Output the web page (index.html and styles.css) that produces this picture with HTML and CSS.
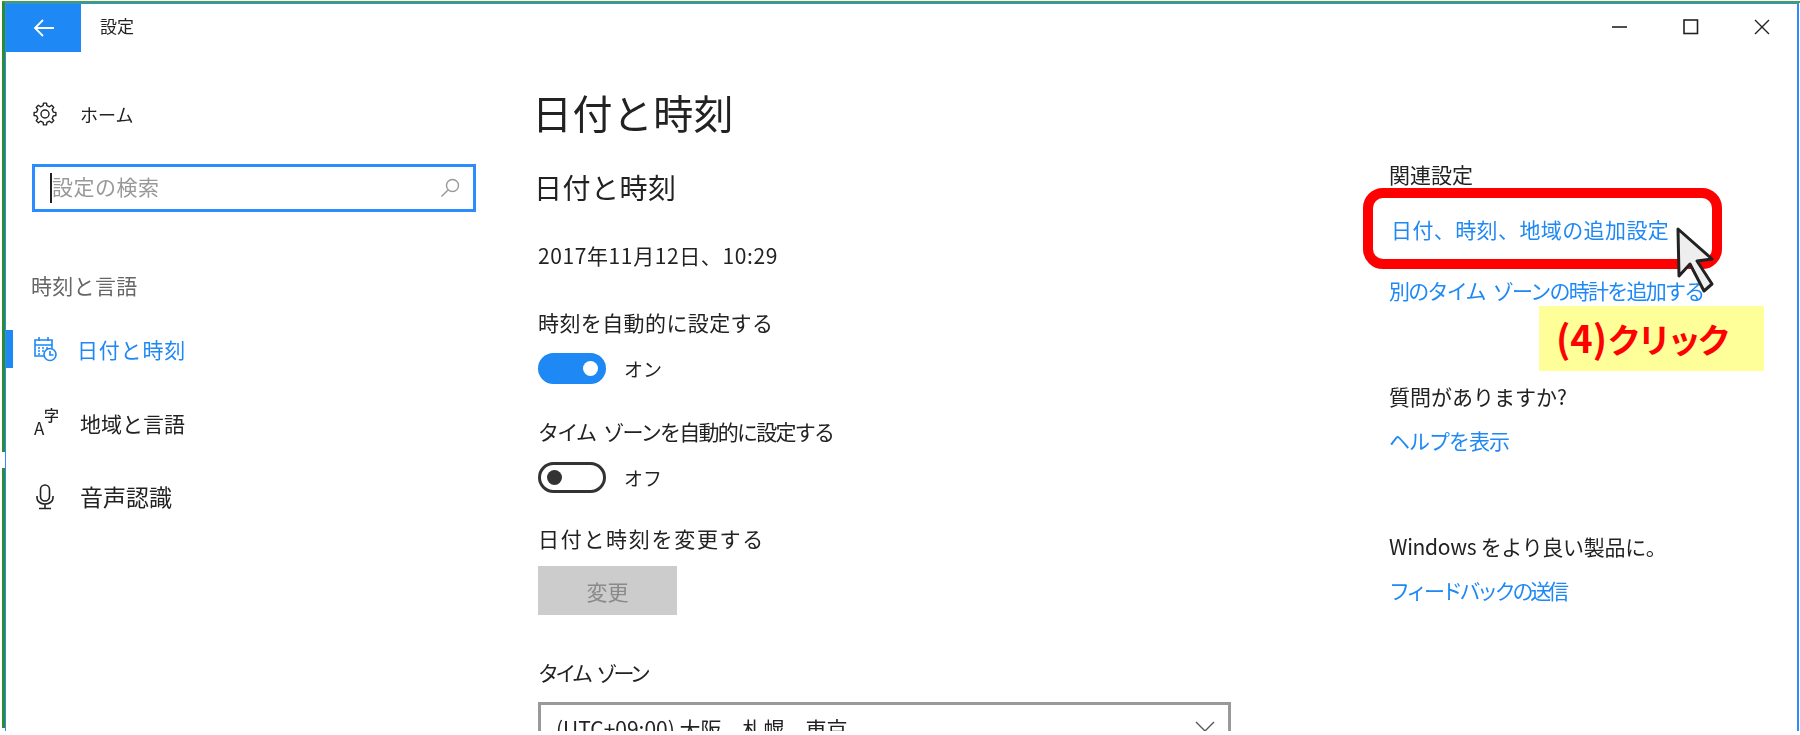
FILE: index.html
```html
<!DOCTYPE html>
<html lang="ja">
<head>
    <meta charset="UTF-8">
    <title>設定</title>
    <link rel="stylesheet" href="styles.css">
</head>
<body>
    <div class="frame">
        <div class="window">
            <div class="titlebar">
                <div class="back">
                    <svg width="22" height="18" viewBox="0 0 22 18"><path d="M10 1 2 9l8 8M2 9h19" fill="none" stroke="#fff" stroke-width="1.8"/></svg>
                </div>
                <div class="app-title">設定</div>
                <div class="win-controls">
                    <svg width="16" height="16" viewBox="0 0 16 16"><path d="M0 8h15" stroke="#222" stroke-width="1.6"/></svg>
                    <svg width="16" height="16" viewBox="0 0 16 16"><rect x="1" y="1" width="13.5" height="13.5" fill="none" stroke="#222" stroke-width="1.6"/></svg>
                    <svg width="16" height="16" viewBox="0 0 16 16"><path d="M1 1l14 14M15 1 1 15" stroke="#222" stroke-width="1.4"/></svg>
                </div>
            </div>

            <div class="layout">
                <div class="sidebar">
                    <div class="nav-item home">
                        <svg class="nav-icon" width="24" height="24" viewBox="0 0 24 24" fill="none" stroke="#222" stroke-width="1.4" stroke-linejoin="round">
                            <polygon points="10.09,3.72 10.47,1.11 13.53,1.11 13.91,3.72 16.5,4.79 18.62,3.21 20.79,5.38 19.21,7.5 20.28,10.09 22.89,10.47 22.89,13.53 20.28,13.91 19.21,16.5 20.79,18.62 18.62,20.79 16.5,19.21 13.91,20.28 13.53,22.89 10.47,22.89 10.09,20.28 7.5,19.21 5.38,20.79 3.21,18.62 4.79,16.5 3.72,13.91 1.11,13.53 1.11,10.47 3.72,10.09 4.79,7.5 3.21,5.38 5.38,3.21 7.5,4.79"/>
                            <circle cx="12" cy="12" r="4"/>
                        </svg>
                        <span class="home-label">ホーム</span>
                    </div>

                    <div class="search">
                        <span class="caret"></span>
                        <span class="search-text">設定の検索</span>
                        <svg width="20" height="20" viewBox="0 0 20 20" fill="none" stroke="#999" stroke-width="1.4"><circle cx="12.5" cy="7.5" r="6"/><path d="M8 12 1.5 18.5"/></svg>
                    </div>

                    <div class="section-title">時刻と言語</div>

                    <div class="nav-item active">
                        <svg class="nav-icon" width="24" height="26" viewBox="0 0 24 26" fill="none" stroke="#1e88f5" stroke-width="1.6">
                            <path d="M11 20H2V4h17v8M2 9h17M6 1v4M15 1v4"/>
                            <path d="M5 12h2M9 12h2M13 12h2M5 15h2M9 15h2M5 18h2" stroke-width="1.5"/>
                            <circle cx="17" cy="18.500" r="6" fill="#fff"/>
                            <path d="M17 15v4h3.500"/>
                        </svg>
                        <span class="active-label">日付と時刻</span>
                    </div>
                    <div class="nav-item">
                        <span class="nav-icon lang-icon"><span class="lang-a">A</span><span class="lang-ji">字</span></span>
                        <span>地域と言語</span>
                    </div>
                    <div class="nav-item">
                        <svg class="nav-icon" width="24" height="26" viewBox="0 0 24 26" fill="none" stroke="#222" stroke-width="1.6">
                            <rect x="7.500" y="1" width="9" height="16" rx="4.500"/>
                            <path d="M4 12v2a8 6 0 0 0 16 0v-2M12 20v4M6 24.500h12"/>
                        </svg>
                        <span class="wide-label">音声認識</span>
                    </div>
                </div>

                <div class="main">
                    <h1>日付と時刻</h1>
                    <h2>日付と時刻</h2>
                    <div class="date-now">2017年11月12日、10:29</div>

                    <div class="label first">時刻を自動的に設定する</div>
                    <div class="toggle-row">
                        <div class="toggle on"><span class="knob"></span></div>
                        <span>オン</span>
                    </div>

                    <div class="label tz-auto">タイム ゾーンを自動的に設定する</div>
                    <div class="toggle-row">
                        <div class="toggle off"><span class="knob"></span></div>
                        <span>オフ</span>
                    </div>

                    <div class="label change-label">日付と時刻を変更する</div>
                    <div class="change-btn">変更</div>

                    <div class="label tz-label">タイム ゾーン</div>
                    <div class="dropdown">
                        <span>(UTC+09:00) 大阪、札幌、東京</span>
                        <svg width="20" height="12" viewBox="0 0 20 12"><path d="M1 1l9 9 9-9" fill="none" stroke="#555" stroke-width="1.4"/></svg>
                    </div>
                </div>

                <div class="related">
                    <div class="rel-title">関連設定</div>
                    <a class="link link-one">日付、時刻、地域の追加設定</a>
                    <a class="link link-two">別のタイム ゾーンの時計を追加する</a>
                    <div class="rel-title q-title">質問がありますか?</div>
                    <a class="link link-help">ヘルプを表示</a>
                    <div class="rel-title fb-title">Windows をより良い製品に。</div>
                    <a class="link link-fb">フィードバックの送信</a>
                </div>
            </div>
        </div>
    </div>

    <!-- annotation drawn on top of the screenshot -->
    <div class="border-gap"></div>
    <div class="border-end"></div>
    <div class="red-box"></div>
    <div class="note"><span class="note-num">(4)</span>クリック</div>
    <svg class="cursor" width="50" height="72" viewBox="0 0 50 72">
        <polygon points="3,3 37,33 22,35 37,58 29,65 15,38 4,50" fill="#eeeeee" stroke="#222" stroke-width="3" stroke-linejoin="round"/>
    </svg>
</body>
</html>
```

FILE: styles.css
```css
* {
    box-sizing: border-box;
}
html, body {
    margin: 0;
    height: 735px;
    overflow: hidden;
    background: white;
}
body {
    font-family: "Noto Sans CJK JP", "Noto Sans", sans-serif;
    font-size: 21px;
    color: #222;
}
.frame {
    height: 730px;
    margin: 1px 0 0 2px;
    overflow: hidden;
    border-left: 3px solid #2e8b2e;
    border-top: 2px solid #4aa04a;
    filter: blur(0.4px);
}
.window {
    height: 100%;
    margin-right: 1px;
    border-left: 1px solid #2a8cff;
    border-top: 1px solid #2a8cff;
    border-right: 2px solid #2a8cff;
    background: white;
}

/* title bar */
.titlebar {
    display: flex;
    align-items: center;
    height: 48px;
}
.back {
    width: 75px;
    height: 48px;
    background: #1e88f5;
    display: flex;
    align-items: center;
    justify-content: center;
}
.app-title {
    margin-left: 19px;
    margin-top: -6px;
    font-size: 17px;
}
.win-controls {
    margin-left: auto;
    margin-right: 27px;
    margin-top: -2px;
    display: flex;
    gap: 55px;
}

.layout {
    display: grid;
    grid-template-columns: 532px 851px 1fr;
}

/* left nav */
.sidebar {
    padding-top: 42px;
}
.nav-item {
    display: flex;
    align-items: center;
    height: 38px;
    padding-left: 27px;
    margin-bottom: 36px;
}
.nav-icon {
    flex: none;
    width: 24px;
    margin-right: 23px;
}
.home {
    height: 40px;
    margin-bottom: 0;
}
.home-label {
    font-size: 18px;
}
.wide-label {
    font-size: 23px;
    margin-top: -2px;
}
.active {
    color: #1e88f5;
    box-shadow: inset 7px 0 0 #1e88f5;
}
.active-label {
    margin-left: -3px;
    letter-spacing: 0.8px;
}
.lang-icon {
    position: relative;
    height: 26px;
}
.lang-a {
    position: absolute;
    left: 1px;
    bottom: 0;
    font-size: 17px;
    line-height: 16px;
}
.lang-ji {
    position: absolute;
    left: 11px;
    top: -3px;
    font-size: 15px;
    font-weight: 500;
    line-height: 16px;
}
.search {
    display: flex;
    align-items: center;
    width: 444px;
    height: 48px;
    margin: 30px 0 0 26px;
    padding: 0 13px 0 15px;
    border: 3px solid #2a8cff;
}
.caret {
    width: 2px;
    height: 30px;
    background: #222;
}
.search-text {
    flex: 1;
    margin-top: -4px;
    letter-spacing: 0.5px;
    color: #999;
}
.section-title {
    margin: 58px 0 30px 25px;
    line-height: 30px;
    letter-spacing: 0.3px;
    color: #666;
}

/* middle column */
.main {
    padding-top: 32px;
}
h1 {
    margin: 0 0 0 -6px;
    font-size: 40px;
    font-weight: 400;
    line-height: 56px;
    letter-spacing: 0.4px;
}
h2 {
    margin: 27px 0 0 -4px;
    font-size: 28px;
    font-weight: 400;
    line-height: 40px;
    letter-spacing: 0.5px;
}
.date-now {
    margin-top: 33px;
    line-height: 30px;
    font-size: 21px;
    letter-spacing: 0.6px;
}
.label {
    margin-top: 32px;
    line-height: 30px;
}
.label.first {
    margin-top: 37px;
    letter-spacing: 0.4px;
}
.tz-auto {
    letter-spacing: -1.75px;
    word-spacing: 5px;
}
.change-label {
    margin-top: 30px;
    letter-spacing: 1.7px;
}
.toggle-row {
    display: flex;
    align-items: center;
    gap: 18px;
    margin-top: 16px;
    height: 31px;
    font-size: 19px;
}
.toggle {
    display: flex;
    align-items: center;
    width: 68px;
    height: 31px;
    border-radius: 16px;
}
.toggle.on {
    background: #1e88f5;
    justify-content: flex-end;
    padding-right: 8px;
}
.toggle.off {
    border: 3px solid #333;
    padding-left: 6px;
}
.knob {
    width: 15px;
    height: 15px;
    border-radius: 50%;
    background: #333;
}
.toggle.on .knob {
    background: white;
}
.change-btn {
    display: flex;
    align-items: center;
    justify-content: center;
    width: 139px;
    height: 49px;
    margin-top: 13px;
    background: #cccccc;
    color: #8a8a8a;
}
.tz-label {
    margin-top: 42px;
    letter-spacing: -3.75px;
    word-spacing: 6px;
}
.dropdown {
    display: flex;
    align-items: flex-start;
    justify-content: space-between;
    width: 693px;
    height: 60px;
    margin-top: 15px;
    padding: 8px 13px 0 15px;
    border: 3px solid #999;
}
.dropdown svg {
    margin-top: 8px;
}

/* right column */
.related {
    padding-top: 107px;
}
.rel-title {
    line-height: 30px;
}
.q-title {
    margin-top: 76px;
}
.fb-title {
    margin-top: 76px;
    letter-spacing: -0.3px;
}
.link {
    display: block;
    line-height: 30px;
    color: #1e88f5;
}
.link-one {
    margin: 25px 0 0 2px;
    letter-spacing: 0.4px;
}
.link-two {
    margin-top: 31px;
    letter-spacing: -1.75px;
    word-spacing: 5px;
}
.link-help {
    margin-top: 14px;
    letter-spacing: -1px;
}
.link-fb {
    margin-top: 14px;
    letter-spacing: -3.3px;
}

/* overlays */
.border-gap {
    position: absolute;
    left: 2px;
    top: 452px;
    width: 3px;
    height: 16px;
    background: white;
}
.border-end {
    position: absolute;
    left: 1px;
    top: 728px;
    width: 4px;
    height: 4px;
    background: white;
}
.red-box {
    position: absolute;
    left: 1363px;
    top: 188px;
    width: 359px;
    height: 81px;
    border: 10px solid #ff0000;
    border-radius: 20px;
}
.note {
    position: absolute;
    left: 1539px;
    top: 306px;
    width: 225px;
    height: 65px;
    padding-left: 17px;
    background: #ffff99;
    color: #ff0000;
    font-size: 34px;
    font-weight: 700;
    line-height: 62px;
    letter-spacing: -4px;
}
.note-num {
    font-size: 38px;
    letter-spacing: 0;
}
.cursor {
    position: absolute;
    left: 1675px;
    top: 226px;
}
```
